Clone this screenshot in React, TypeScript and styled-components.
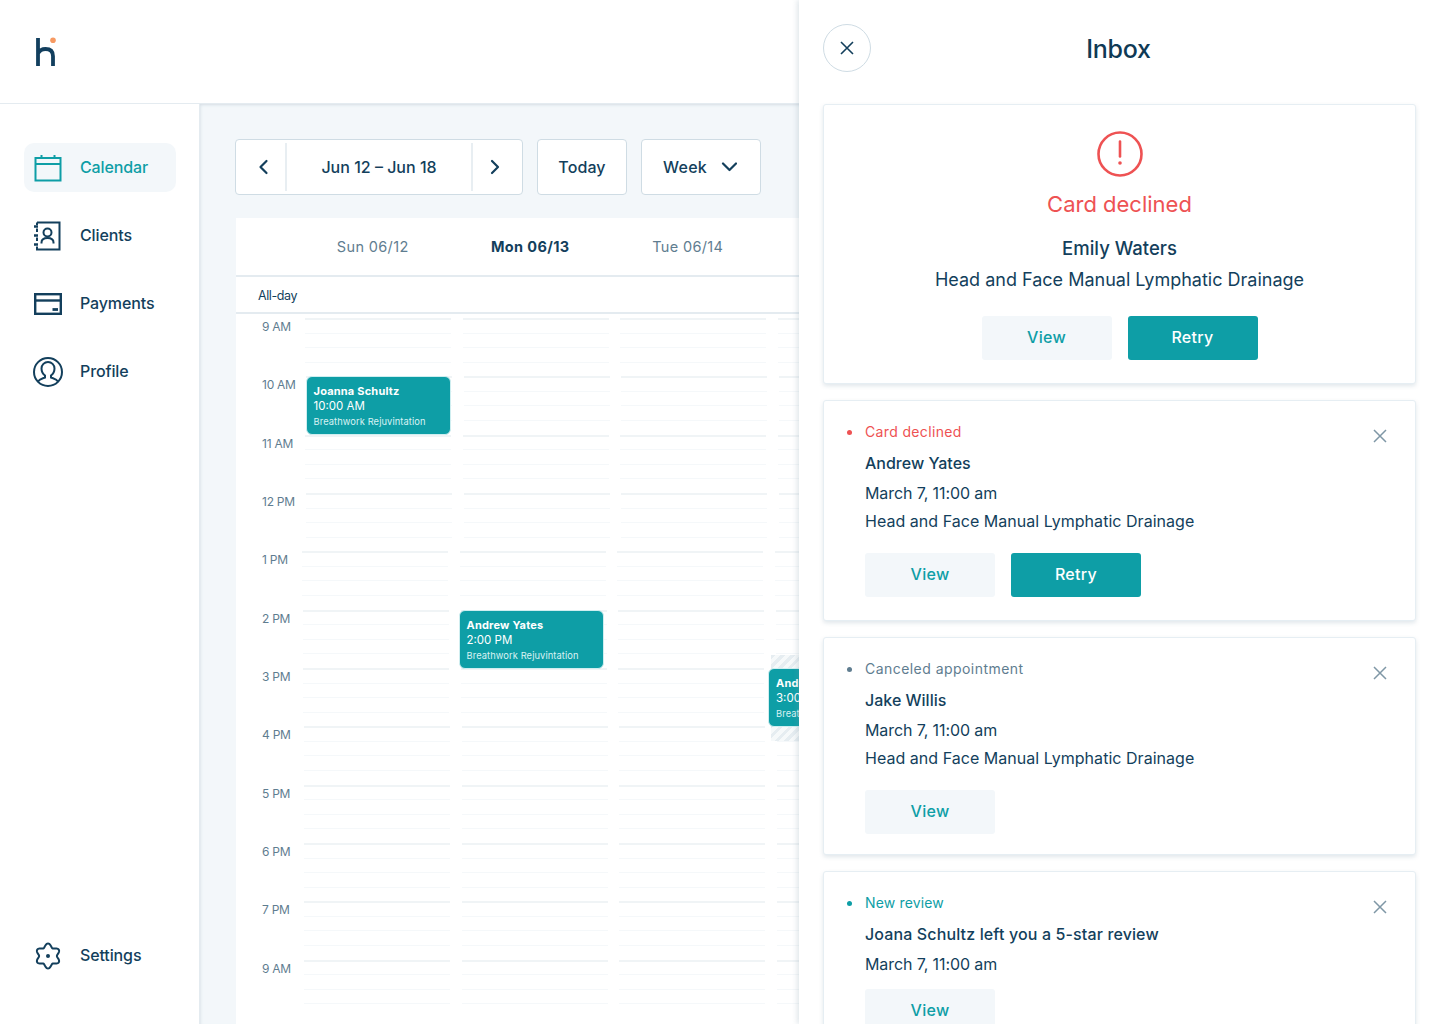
import React from "react";
import styled, { createGlobalStyle } from "styled-components";

const INK = "#133f5c";
const TEAL = "#0e9ea6";
const RED = "#ee5253";
const SLATE = "#5f7d90";
const LINE = "#cfdce4";
const FONT = `Inter, "Noto Sans", "Liberation Sans", sans-serif`;

const Global = createGlobalStyle`
  html, body { margin: 0; padding: 0; background: #fff; }
  body { font-family: ${FONT}; color: ${INK}; overflow: hidden; }
  * { box-sizing: border-box; }
`;

const Page = styled.div`
  position: relative;
  width: 1440px;
  height: 1024px;
  overflow: hidden;
  background: #fff;
`;
const TopBar = styled.header`
  height: 104px;
  padding: 36px 0 0 34px;
  border-bottom: 1px solid #e4ebf0;
  background: #fff;
`;
const Body = styled.div`
  display: flex;
  height: 920px;
`;
const Sidebar = styled.nav`
  flex: 0 0 200px;
  display: flex;
  flex-direction: column;
  padding: 39px 23px 25px 24px;
  border-right: 1px solid #e4ebf0;
  background: #fff;
`;
const NavItem = styled.a<{ $active?: boolean }>`
  display: flex;
  align-items: center;
  gap: 16px;
  height: 49px;
  margin: 0 0 19px;
  padding-left: 8px;
  border-radius: 10px;
  background: ${(p) => (p.$active ? "#f3f7fa" : "transparent")};
  color: ${(p) => (p.$active ? TEAL : INK)};
  font-size: 16px;
  font-weight: 450;
  letter-spacing: -0.12px;
`;
const NavLabel = styled.span`
  margin-top: -1px;
`;
const NavSpacer = styled.div`
  flex: 1;
`;
const Content = styled.main`
  flex: 1;
  min-width: 0;
  padding: 35px 0 0 35px;
  background: #f3f7fa;
  box-shadow: inset 0 3px 3px -2px #d5dee4, inset 3px 0 3px -2px #dfe7ec;
`;
const Toolbar = styled.div`
  display: flex;
  gap: 14px;
  height: 56px;
`;
const ToolBox = styled.div<{ $width: number; $trim?: number }>`
  display: flex;
  align-items: center;
  justify-content: center;
  width: ${(p) => p.$width}px;
  padding-right: ${(p) => p.$trim ?? 0}px;
  border: 1px solid ${LINE};
  border-radius: 4px;
  background: #fff;
  font-size: 16px;
  font-weight: 450;
  letter-spacing: 0.1px;
`;
const ArrowCell = styled.div<{ $nudge: number }>`
  flex: 0 0 49px;
  display: flex;
  align-items: center;
  justify-content: center;
  transform: translateX(${(p) => p.$nudge}px);
`;
const ToolDivider = styled.i`
  flex: 0 0 2px;
  height: 48px;
  background: #e8eef2;
`;
const RangeLabel = styled.div`
  flex: 1;
  text-align: center;
  letter-spacing: 0;
`;
const WeekLabel = styled.span`
  margin-right: 14px;
  letter-spacing: 0.3px;
`;
const Calendar = styled.section`
  margin: 23px 0 0 1px;
  height: 806px;
  background: #fff;
  overflow: hidden;
`;
const DayHeader = styled.div`
  display: flex;
  height: 59px;
  padding-left: 58px;
  border-bottom: 2px solid #e4ebf0;
`;
const DayName = styled.div<{ $today?: boolean }>`
  flex: 0 0 157.5px;
  text-align: center;
  line-height: 58px;
  font-size: 14.5px;
  font-weight: ${(p) => (p.$today ? 700 : 400)};
  color: ${(p) => (p.$today ? INK : SLATE)};
  letter-spacing: 0.35px;
`;
const AllDay = styled.div`
  height: 37px;
  padding-left: 22px;
  border-bottom: 2px solid #e4ebf0;
  font-size: 12.5px;
  line-height: 38px;
  letter-spacing: -0.4px;
`;
const Grid = styled.div`
  position: relative;
  padding-top: 4px;
`;
const HourRow = styled.div`
  display: flex;
  height: 58.33px;
  padding-left: 26px;
`;
const TimeLabel = styled.div`
  flex: 0 0 40px;
  padding-top: 1px;
  font-size: 12px;
  line-height: 15px;
  color: ${SLATE};
  letter-spacing: -0.25px;
  white-space: nowrap;
`;
const Track = styled.div<{ $shift: number }>`
  display: flex;
  gap: 11.5px;
  margin-left: ${(p) => p.$shift}px;
`;
const Segment = styled.div`
  flex: 0 0 146px;
`;
const Tick = styled.div<{ $hour?: boolean }>`
  height: 14.58px;
  border-top: ${(p) => (p.$hour ? "2px solid #f0f4f6" : "1px solid #f5f8fa")};
`;
const Hatch = styled.div`
  position: absolute;
  left: 535px;
  top: 341px;
  width: 40px;
  height: 86px;
  background: repeating-linear-gradient(135deg, #e6edf1 0 3px, #f6f9fa 3px 7px);
`;
const Event = styled.div<{ $left: number; $top: number }>`
  position: absolute;
  left: ${(p) => p.$left}px;
  top: ${(p) => p.$top}px;
  width: 145px;
  height: 59px;
  padding: 7px 0 0 7px;
  border: 1px solid #cfeef0;
  border-radius: 6px;
  background: ${TEAL};
  color: #fff;
  overflow: hidden;
  white-space: nowrap;
`;
const EventName = styled.div`
  font-size: 11px;
  line-height: 15px;
  font-weight: 700;
  letter-spacing: 0.2px;
`;
const EventTime = styled.div`
  font-size: 11.5px;
  line-height: 15px;
`;
const EventKind = styled.div`
  font-size: 9.3px;
  line-height: 15px;
  color: #d9f2f3;
  letter-spacing: 0.1px;
`;
const Drawer = styled.aside`
  position: absolute;
  top: 0;
  right: 0;
  bottom: 0;
  width: 641px;
  padding: 24px 24px 0;
  background: #fff;
  box-shadow: -2px 0 5px rgba(120, 145, 165, 0.22);
  overflow: hidden;
`;
const DrawerHead = styled.div`
  display: flex;
  align-items: center;
  height: 48px;
  margin-bottom: 32px;
`;
const CloseCircle = styled.div`
  flex: 0 0 48px;
  height: 48px;
  display: flex;
  align-items: center;
  justify-content: center;
  border: 1px solid ${LINE};
  border-radius: 50%;
`;
const DrawerTitle = styled.h1`
  flex: 1;
  margin: 2px 50px 0 0;
  text-align: center;
  font-size: 25px;
  line-height: 48px;
  font-weight: 500;
  letter-spacing: -0.3px;
  color: #0f3a55;
`;
const Card = styled.article`
  width: 593px;
  margin-bottom: 16px;
  border: 1px solid #e6eef3;
  border-radius: 3px;
  background: #fff;
  box-shadow: 0 2px 4px rgba(120, 145, 165, 0.22);
`;
const HeroCard = styled(Card)`
  height: 280px;
  padding-top: 25px;
  text-align: center;
`;
const HeroIcon = styled.div`
  height: 48px;
`;
const HeroTitle = styled.div`
  margin-top: 11px;
  font-size: 22px;
  line-height: 30px;
  font-weight: 400;
  color: ${RED};
`;
const HeroName = styled.div`
  margin-top: 17px;
  font-size: 18.5px;
  line-height: 24px;
  font-weight: 500;
`;
const HeroText = styled.div`
  margin-top: 8px;
  font-size: 18px;
  line-height: 24px;
`;
const HeroActions = styled.div`
  display: flex;
  justify-content: center;
  gap: 16px;
  margin-top: 24px;
`;
const Actions = styled.div<{ $gap: number }>`
  display: flex;
  gap: 16px;
  margin-top: ${(p) => p.$gap}px;
`;
const Button = styled.div<{ $primary?: boolean }>`
  flex: 0 0 130px;
  height: 44px;
  padding-bottom: 2px;
  display: flex;
  align-items: center;
  justify-content: center;
  border-radius: 3px;
  background: ${(p) => (p.$primary ? TEAL : "#f3f7fa")};
  color: ${(p) => (p.$primary ? "#fff" : TEAL)};
  font-size: 16px;
  font-weight: 450;
  letter-spacing: 0.3px;
`;
const NoticeCard = styled(Card)<{ $height: number }>`
  display: flex;
  height: ${(p) => p.$height}px;
  padding: 21px 27px 0 23px;
  overflow: hidden;
`;
const Dot = styled.i<{ $color: string }>`
  flex: 0 0 5px;
  height: 5px;
  margin: 8px 13px 0 0;
  border-radius: 50%;
  background: ${(p) => p.$color};
`;
const NoticeBody = styled.div`
  flex: 1;
`;
const NoticeKind = styled.div<{ $color: string; $spacing: number }>`
  font-size: 14px;
  line-height: 20px;
  color: ${(p) => p.$color};
  letter-spacing: ${(p) => p.$spacing}px;
`;
const NoticeName = styled.div<{ $spacing?: number }>`
  margin-top: 9px;
  font-size: 16px;
  line-height: 24px;
  font-weight: 500;
  letter-spacing: ${(p) => p.$spacing ?? 0}px;
`;
const NoticeDate = styled.div`
  margin-top: 6px;
  font-size: 16px;
  line-height: 24px;
  letter-spacing: -0.1px;
`;
const NoticeService = styled.div`
  margin-top: 4px;
  font-size: 16px;
  line-height: 24px;
  letter-spacing: 0.03px;
`;
const Dismiss = styled.div`
  flex: 0 0 16px;
  height: 16px;
  margin-top: 6px;
`;

const X = ({ size, color, width }: { size: number; color: string; width: number }) => (
  <svg width={size} height={size} viewBox="0 0 16 16" fill="none" stroke={color} strokeWidth={width} style={{ display: "block" }}>
    <path d="M2 2l12 12M14 2L2 14" />
  </svg>
);
const Chevron = ({ dir }: { dir: "left" | "right" | "down" }) => {
  const d = dir === "left" ? "M10.500 3L4.500 9l6 6" : dir === "right" ? "M5 3l6 6-6 6" : "M2 5.500l6.500 6.500L15 5.500";
  return (
    <svg width="16" height="18" viewBox="0 0 16 18" fill="none" stroke={INK} strokeWidth="2.200" strokeLinecap="round" strokeLinejoin="round">
      <path d={d} />
    </svg>
  );
};
const Logo = () => (
  <svg width="24" height="32" viewBox="0 0 24 32" fill="none">
    <path d="M4 2v28M4 17.500c1.500-3 4-4.500 7.500-4.500 5 0 7.500 2.700 7.500 7.200V30" stroke="#123f5e" strokeWidth="3.800" />
    <circle cx="19" cy="4.300" r="2.800" fill="#f79a62" />
  </svg>
);
const CalendarIcon = () => (
  <svg width="32" height="32" viewBox="0 0 32 32" fill="none" stroke={TEAL} strokeWidth="2">
    <rect x="3.500" y="6" width="25" height="22.500" />
    <path d="M3.500 12h25" />
    <path d="M9.500 3v3M22.500 3v3" />
  </svg>
);
const ClientsIcon = () => (
  <svg width="32" height="32" viewBox="0 0 32 32" fill="none" stroke={INK} strokeWidth="2">
    <path d="M5 2.500h22.500v27H5v-3M5 21v-3.500M5 12V8.500M5 5V2.500" />
    <path d="M2 6.500h4M2 15.500h4M2 24.500h4" strokeWidth="2.400" />
    <circle cx="15.500" cy="12.500" r="4" />
    <path d="M9.500 23.500v-1c0-2.500 2-4.500 6-4.500s6 2 6 4.500v1" />
  </svg>
);
const PaymentsIcon = () => (
  <svg width="32" height="32" viewBox="0 0 32 32" fill="none" stroke={INK}>
    <rect x="3.200" y="6.200" width="25.600" height="19.600" strokeWidth="2.400" />
    <path d="M3 12.500h26" strokeWidth="2.400" />
    <path d="M20.500 21.500h5.500" strokeWidth="2.800" />
  </svg>
);
const ProfileIcon = () => (
  <svg width="32" height="32" viewBox="0 0 32 32" fill="none" stroke={INK} strokeWidth="2">
    <circle cx="16" cy="16" r="14" />
    <path d="M5.500 26c2-3 5-3.500 7.500-4.500v-2c-2-1.500-3.500-4-3.500-7a6.500 6.500 0 0 1 13 0c0 3-1.500 5.500-3.500 7v2c2.500 1 5.500 1.500 7.500 4.500" />
  </svg>
);
const gearPath = Array.from({ length: 121 }, (_, i) => {
  const t = (i / 120) * Math.PI * 2;
  const r = 10.7 + 1.8 * Math.cos(6 * t);
  return `${i ? "L" : "M"}${(16 + r * Math.sin(t)).toFixed(2)} ${(16 - r * Math.cos(t)).toFixed(2)}`;
}).join("") + "Z";
const SettingsIcon = () => (
  <svg width="32" height="32" viewBox="0 0 32 32" fill="none" stroke={INK} strokeWidth="2">
    <path d={gearPath} />
    <circle cx="16" cy="16" r="2" fill={INK} stroke="none" />
  </svg>
);
const AlertIcon = () => (
  <svg width="48" height="48" viewBox="0 0 48 48" fill="none" stroke={RED} strokeWidth="2.600">
    <circle cx="24" cy="24" r="21.500" />
    <path d="M24 11.500v15" strokeLinecap="round" />
    <circle cx="24" cy="33" r="1.800" fill={RED} stroke="none" />
  </svg>
);

const hours: [string, number][] = [
  ["9 AM", 3],
  ["10 AM", 4],
  ["11 AM", 3],
  ["12 PM", 4],
  ["1 PM", 0],
  ["2 PM", 1],
  ["3 PM", 1],
  ["4 PM", 2],
  ["5 PM", 2],
  ["6 PM", 2],
  ["7 PM", 2],
  ["9 AM", 2],
];
const events = [
  { name: "Joanna Schultz", time: "10:00 AM", left: 69.5, top: 62 },
  { name: "Andrew Yates", time: "2:00 PM", left: 222.5, top: 296 },
  { name: "Andrew Yates", time: "3:00 PM", left: 532, top: 354 },
];
const SERVICE = "Head and Face Manual Lymphatic Drainage";

export default function App() {
  return (
    <Page>
      <Global />
      <TopBar>
        <Logo />
      </TopBar>
      <Body>
        <Sidebar>
          <NavItem $active><CalendarIcon /><NavLabel>Calendar</NavLabel></NavItem>
          <NavItem><ClientsIcon /><NavLabel>Clients</NavLabel></NavItem>
          <NavItem><PaymentsIcon /><NavLabel>Payments</NavLabel></NavItem>
          <NavItem><ProfileIcon /><NavLabel>Profile</NavLabel></NavItem>
          <NavSpacer />
          <NavItem><SettingsIcon /><NavLabel>Settings</NavLabel></NavItem>
        </Sidebar>
        <Content>
          <Toolbar>
            <ToolBox $width={288}>
              <ArrowCell $nudge={3}><Chevron dir="left" /></ArrowCell>
              <ToolDivider />
              <RangeLabel>Jun 12 – Jun 18</RangeLabel>
              <ToolDivider />
              <ArrowCell $nudge={-3}><Chevron dir="right" /></ArrowCell>
            </ToolBox>
            <ToolBox $width={90}>Today</ToolBox>
            <ToolBox $width={120} $trim={2}><WeekLabel>Week</WeekLabel><Chevron dir="down" /></ToolBox>
          </Toolbar>
          <Calendar>
            <DayHeader>
              <DayName>Sun 06/12</DayName>
              <DayName $today>Mon 06/13</DayName>
              <DayName>Tue 06/14</DayName>
            </DayHeader>
            <AllDay>All-day</AllDay>
            <Grid>
              {hours.map(([label, shift], i) => (
                <HourRow key={i}>
                  <TimeLabel>{label}</TimeLabel>
                  <Track $shift={shift}>
                    {[0, 1, 2, 3].map((c) => (
                      <Segment key={c}>
                        {[0, 1, 2, 3].map((t) => <Tick key={t} $hour={t === 0} />)}
                      </Segment>
                    ))}
                  </Track>
                </HourRow>
              ))}
              <Hatch />
              {events.map((e) => (
                <Event key={e.left} $left={e.left} $top={e.top}>
                  <EventName>{e.name}</EventName>
                  <EventTime>{e.time}</EventTime>
                  <EventKind>Breathwork Rejuvintation</EventKind>
                </Event>
              ))}
            </Grid>
          </Calendar>
        </Content>
      </Body>
      <Drawer>
        <DrawerHead>
          <CloseCircle><X size={16} color={INK} width={1.6} /></CloseCircle>
          <DrawerTitle>Inbox</DrawerTitle>
        </DrawerHead>
        <HeroCard>
          <HeroIcon><AlertIcon /></HeroIcon>
          <HeroTitle>Card declined</HeroTitle>
          <HeroName>Emily Waters</HeroName>
          <HeroText>{SERVICE}</HeroText>
          <HeroActions>
            <Button>View</Button>
            <Button $primary>Retry</Button>
          </HeroActions>
        </HeroCard>
        <NoticeCard $height={221}>
          <Dot $color={RED} />
          <NoticeBody>
            <NoticeKind $color={RED} $spacing={0.35}>Card declined</NoticeKind>
            <NoticeName>Andrew Yates</NoticeName>
            <NoticeDate>March 7, 11:00 am</NoticeDate>
            <NoticeService>{SERVICE}</NoticeService>
            <Actions $gap={20}>
              <Button>View</Button>
              <Button $primary>Retry</Button>
            </Actions>
          </NoticeBody>
          <Dismiss><X size={16} color="#7f97a6" width={1.5} /></Dismiss>
        </NoticeCard>
        <NoticeCard $height={218}>
          <Dot $color={SLATE} />
          <NoticeBody>
            <NoticeKind $color={SLATE} $spacing={0.45}>Canceled appointment</NoticeKind>
            <NoticeName>Jake Willis</NoticeName>
            <NoticeDate>March 7, 11:00 am</NoticeDate>
            <NoticeService>{SERVICE}</NoticeService>
            <Actions $gap={20}>
              <Button>View</Button>
            </Actions>
          </NoticeBody>
          <Dismiss><X size={16} color="#7f97a6" width={1.5} /></Dismiss>
        </NoticeCard>
        <NoticeCard $height={200}>
          <Dot $color={TEAL} />
          <NoticeBody>
            <NoticeKind $color={TEAL} $spacing={0.15}>New review</NoticeKind>
            <NoticeName $spacing={0.13}>Joana Schultz left you a 5-star review</NoticeName>
            <NoticeDate>March 7, 11:00 am</NoticeDate>
            <Actions $gap={13}>
              <Button>View</Button>
            </Actions>
          </NoticeBody>
          <Dismiss><X size={16} color="#7f97a6" width={1.5} /></Dismiss>
        </NoticeCard>
      </Drawer>
    </Page>
  );
}
